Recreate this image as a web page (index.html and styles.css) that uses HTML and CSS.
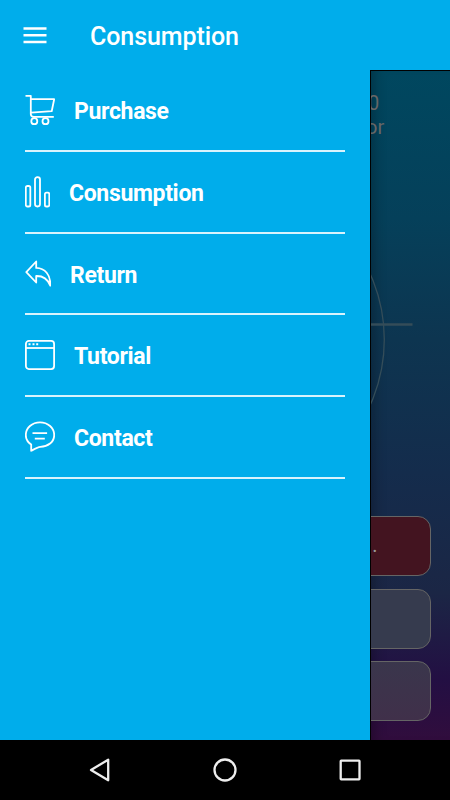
FILE: index.html
```html
<!DOCTYPE html>
<html lang="en">
<head>
<meta charset="utf-8">
<title>Consumption</title>
<link rel="stylesheet" href="styles.css">
</head>
<body>
<header class="appbar">
  <svg class="menu" width="24" height="17" viewBox="0 0 24 17"><path d="M.5 1.5h23M.5 8.3h23M.5 15h23"/></svg>
  <h1>Consumption</h1>
</header>
<main class="stage">
  <nav class="drawer">
    <a class="item"><svg width="30" height="32" viewBox="0 0 30 32"><path d="M.5 1.8h5.3V20.5M5.8 5.2h23.4L26.7 17.2 6 18.6M5.8 20c0 2 1 2.8 3 2.8h20"/><circle cx="9.3" cy="27.2" r="3"/><circle cx="20.5" cy="27.2" r="3"/></svg><span>Purchase</span></a>
    <a class="item"><svg width="25" height="32" viewBox="0 0 25 32"><rect x=".8" y="10" width="4.5" height="20.5" rx="1.6"/><rect x="10" y="1.2" width="5" height="29.3" rx="2.4"/><rect x="19.9" y="16.6" width="4.4" height="13.9" rx="1.6"/></svg><span>Consumption</span></a>
    <a class="item"><svg width="26" height="32" viewBox="0 0 26 32"><path d="M1.3 14.1 11.2 3.5V9.9C20 10.1 25.7 16.8 25.3 27.6 22.7 21.1 18 17.8 11.2 18V24.5Z"/></svg><span>Return</span></a>
    <a class="item"><svg width="30" height="32" viewBox="0 0 30 32"><rect x=".9" y="1.9" width="28.2" height="28.2" rx="3"/><path d="M1 9h28"/><path class="dots" d="M3.5 5.3h2M7.5 5.3h2M11.2 5.3h2"/></svg><span>Tutorial</span></a>
    <a class="item"><svg width="30" height="32" viewBox="0 0 30 32"><path d="M6.2 23.6C2.8 21.3.8 17.8.8 14.1.8 6.9 7.1 1.3 15 1.3S29.2 6.9 29.2 14.1 22.9 25.5 15.3 25.9C13 26 12.2 26.5 6.2 29.8Z"/><path d="M7.5 12.1h14.6M9.8 17.7h10"/></svg><span>Contact</span></a>
  </nav>
  <section class="page">
    <div class="summary"><p class="count">0</p><p class="unit">or</p></div>
    <svg class="gauge" width="80" height="160" viewBox="370 260 80 160"><circle cx="225" cy="339.5" r="159.3"/><path d="M370 324.5h42.5"/></svg>
    <div class="actions">
      <div class="button primary">..</div>
      <div class="button"></div>
      <div class="button"></div>
    </div>
  </section>
</main>
<footer class="sysbar">
  <svg viewBox="0 0 28 28"><path d="M5 14 22.2 3.7V24.3Z"/></svg>
  <svg viewBox="0 0 28 28"><circle cx="14" cy="14" r="10.5"/></svg>
  <svg viewBox="0 0 28 28"><rect x="4.7" y="4.7" width="18.8" height="18.6" rx=".5"/></svg>
</footer>
</body>
</html>
```
FILE: styles.css
```css
* { box-sizing: border-box; }
body { margin: 0; width: 450px; height: 800px; overflow: hidden; display: grid; grid-template-rows: 70px 670px 60px; font-family: Roboto, sans-serif; color: #fff; background: #000; }
svg { display: block; flex: none; fill: none; stroke: #fff; }
p, h1 { margin: 0; }
.appbar { display: flex; align-items: center; padding: 0 23px; gap: 43px; background: #00adeb; }
.menu { stroke-width: 2.6; }
h1 { font-size: 25px; font-weight: 500; line-height: 30px; padding-top: 4px; letter-spacing: -.08px; }
.stage { display: grid; grid-template-columns: 370px 80px; min-height: 0; }
.drawer { background: #00adeb; padding: .2px 25px 0; }
.item { display: flex; height: 81.75px; align-items: center; gap: 19px; border-bottom: 2px solid #d9f3fd; font-size: 23px; font-weight: 700; letter-spacing: -.33px; }
.item svg { stroke-width: 1.8; stroke-linejoin: round; }
.item .dots { stroke-width: 2; }
.item span { padding-top: 3px; }
.page { overflow: hidden; min-width: 0; border-left: 1px solid #000; border-top: 1px solid #000; background: linear-gradient(#00475f 0, #05405a 22%, #0d3550 40%, #142c4c 60%, #1b2645 78%, #230f43 91%, #310d3d 100%); box-shadow: inset 12px 0 12px -8px rgba(0,0,0,.25); }
.summary { height: 189px; padding-top: 20px; font-size: 20px; line-height: 24px; color: #666; }
.count { margin-left: -3px; }
.unit { margin-left: -5px; }
.gauge { margin-left: -1px; stroke: #344d59; }
.gauge circle { stroke-width: 1.3; }
.gauge path { stroke-width: 2.5; }
.actions { display: grid; gap: 12.5px; margin: 96px 19px 0 -20px; }
.button { height: 60px; border: 1.4px solid #656565; border-radius: 13px; background: #363b4e; color: #999; font-size: 20px; line-height: 56px; padding-left: 15px; }
.button:last-child { background: linear-gradient(#3a364c, #40304a); }
.primary { background: #431420; }
.sysbar { display: flex; justify-content: center; align-items: center; gap: 97px; background: #000; }
.sysbar svg { width: 28px; height: 28px; stroke: #eee; stroke-width: 2.3; stroke-linejoin: round; }
```
